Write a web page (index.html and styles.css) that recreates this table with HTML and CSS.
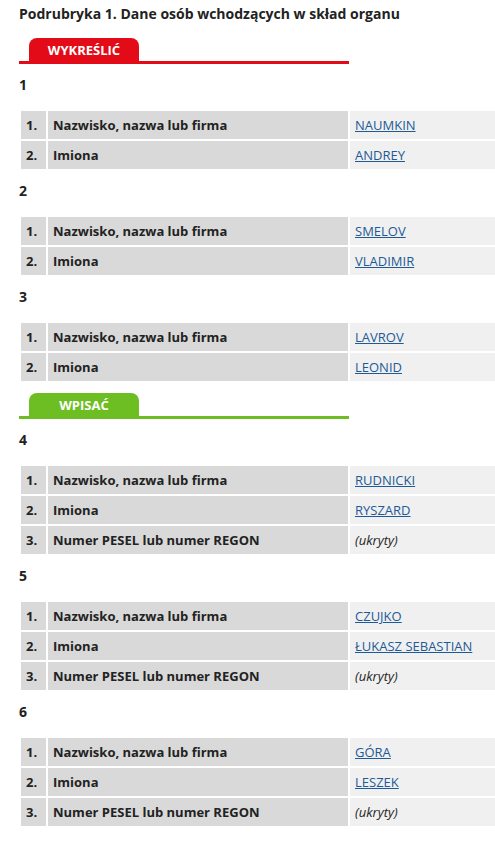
FILE: index.html
```html
<!DOCTYPE html>
<html lang="pl">
<head>
<meta charset="utf-8">
<title>Podrubryka 1</title>
<link rel="stylesheet" href="styles.css">
</head>
<body>
<div class="page">
  <h2 class="title">Podrubryka 1. Dane osób wchodzących w skład organu</h2>

  <div class="tabbar tabbar-red"><span class="tab">WYKREŚLIĆ</span></div>

  <h3 class="num">1</h3>
  <table class="data">
    <tr><td class="c-no">1.</td><td class="c-label">Nazwisko, nazwa lub firma</td><td class="c-val"><a href="#">NAUMKIN</a></td></tr>
    <tr><td class="c-no">2.</td><td class="c-label">Imiona</td><td class="c-val"><a href="#">ANDREY</a></td></tr>
  </table>

  <h3 class="num">2</h3>
  <table class="data">
    <tr><td class="c-no">1.</td><td class="c-label">Nazwisko, nazwa lub firma</td><td class="c-val"><a href="#">SMELOV</a></td></tr>
    <tr><td class="c-no">2.</td><td class="c-label">Imiona</td><td class="c-val"><a href="#">VLADIMIR</a></td></tr>
  </table>

  <h3 class="num">3</h3>
  <table class="data">
    <tr><td class="c-no">1.</td><td class="c-label">Nazwisko, nazwa lub firma</td><td class="c-val"><a href="#">LAVROV</a></td></tr>
    <tr><td class="c-no">2.</td><td class="c-label">Imiona</td><td class="c-val"><a href="#">LEONID</a></td></tr>
  </table>

  <div class="tabbar tabbar-green"><span class="tab">WPISAĆ</span></div>

  <h3 class="num">4</h3>
  <table class="data">
    <tr><td class="c-no">1.</td><td class="c-label">Nazwisko, nazwa lub firma</td><td class="c-val"><a href="#">RUDNICKI</a></td></tr>
    <tr><td class="c-no">2.</td><td class="c-label">Imiona</td><td class="c-val"><a href="#">RYSZARD</a></td></tr>
    <tr><td class="c-no">3.</td><td class="c-label">Numer PESEL lub numer REGON</td><td class="c-val"><em>(ukryty)</em></td></tr>
  </table>

  <h3 class="num">5</h3>
  <table class="data">
    <tr><td class="c-no">1.</td><td class="c-label">Nazwisko, nazwa lub firma</td><td class="c-val"><a href="#">CZUJKO</a></td></tr>
    <tr><td class="c-no">2.</td><td class="c-label">Imiona</td><td class="c-val"><a href="#">ŁUKASZ SEBASTIAN</a></td></tr>
    <tr><td class="c-no">3.</td><td class="c-label">Numer PESEL lub numer REGON</td><td class="c-val"><em>(ukryty)</em></td></tr>
  </table>

  <h3 class="num">6</h3>
  <table class="data">
    <tr><td class="c-no">1.</td><td class="c-label">Nazwisko, nazwa lub firma</td><td class="c-val"><a href="#">GÓRA</a></td></tr>
    <tr><td class="c-no">2.</td><td class="c-label">Imiona</td><td class="c-val"><a href="#">LESZEK</a></td></tr>
    <tr><td class="c-no">3.</td><td class="c-label">Numer PESEL lub numer REGON</td><td class="c-val"><em>(ukryty)</em></td></tr>
  </table>
</div>
</body>
</html>
```

FILE: styles.css
```css
html, body {
  margin: 0;
  padding: 0;
  background: #ffffff;
}

body {
  font-family: "Open Sans", "Liberation Sans", sans-serif;
  color: #222222;
  font-size: 13px;
  overflow-x: hidden;
}

.page {
  padding: 4px 0 0 19px;
}

.title {
  margin: 0;
  font-size: 14px;
  line-height: 20px;
  font-weight: 700;
  color: #222222;
}

.tabbar {
  width: 330px;
  margin-top: 14px;
  display: flex;
  padding-left: 10px;
  box-sizing: border-box;
  border-bottom: 3px solid #e30b17;
}

.tab {
  width: 110px;
  height: 23px;
  border-radius: 8px 8px 0 0;
  color: #ffffff;
  font-size: 13px;
  font-weight: 700;
  line-height: 24px;
  text-align: center;
  background: #e30b17;
}

.tabbar-green {
  margin-top: 10px;
  border-bottom-color: #6cbe22;
}

.tabbar-green .tab {
  background: #6cbe22;
}

.num {
  margin: 11px 0 14px;
  font-size: 14px;
  line-height: 20px;
  font-weight: 700;
}

.data + .num {
  margin-top: 10px;
}

.data {
  border-collapse: separate;
  border-spacing: 2px;
  width: 478px;
  table-layout: fixed;
}

.data td {
  height: 28px;
  padding: 0 5px;
  line-height: 18px;
  font-size: 13px;
  box-sizing: border-box;
  white-space: nowrap;
}

.c-no {
  width: 25px;
  background: #d9d9d9;
  font-weight: 700;
}

.c-label {
  width: 300px;
  background: #d9d9d9;
  font-weight: 700;
}

.c-val {
  width: 145px;
  background: #f0f0f0;
}

.c-val a {
  color: #1d5a96;
  text-decoration: underline;
}

.c-val em {
  font-style: italic;
  color: #222222;
}
```
